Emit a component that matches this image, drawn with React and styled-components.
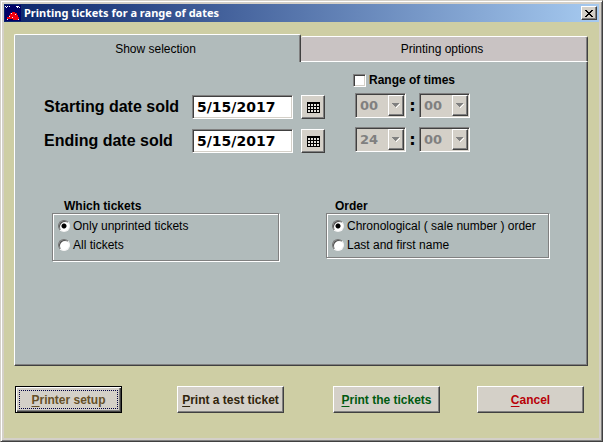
import React, { useState } from "react";
import styled, { createGlobalStyle, css } from "styled-components";

const face = "#d4d0c8";
const pane = "#b1bbbb";
const olive = "#cecea4";

const Global = createGlobalStyle`
  * { box-sizing: border-box; }
  body {
    margin: 0;
    background: ${face};
    font: 12px/14px "Liberation Sans", Arial, sans-serif;
    color: #000;
  }
  button, input, select { font: inherit; color: inherit; margin: 0; }
`;

const raised = css`
  border: 1px solid;
  border-color: #fff #404040 #404040 #fff;
  box-shadow: inset -1px -1px #808080;
`;

const sunken = css`
  border: 1px solid;
  border-color: #808080 #fff #fff #808080;
  box-shadow: inset 1px 1px #404040, inset -1px -1px ${face};
`;

const Window = styled.main`
  display: flex;
  flex-direction: column;
  min-height: 100vh;
  padding: 3px;
  background: ${face};
  border: 1px solid;
  border-color: ${face} #404040 #404040 ${face};
  box-shadow: inset 1px 1px #fff, inset -1px -1px #808080;
`;

const TitleBar = styled.header`
  display: flex;
  align-items: center;
  gap: 3px;
  height: 18px;
  padding: 0 2px 0 1px;
  background: linear-gradient(90deg, #0a246a, #a6caf0);
`;

const Title = styled.h1`
  flex: 1;
  margin: 0;
  color: #fff;
  font: bold 11px/16px "Noto Sans", Tahoma, sans-serif;
`;

const CloseButton = styled.button`
  display: grid;
  place-items: center;
  width: 16px;
  height: 14px;
  padding: 0;
  background: ${face};
  ${raised}
`;

const Body = styled.div`
  flex: 1;
  display: flex;
  flex-direction: column;
  gap: 20px;
  padding: 12px 11px 25px 10px;
  background: ${olive};
`;

const Tabbed = styled.section`
  flex: 1;
  display: flex;
  flex-direction: column;
`;

const TabList = styled.div`
  display: grid;
  grid-template-columns: 1fr 1fr;
  align-items: end;
  height: 28px;
`;

const Tab = styled.button`
  height: ${(p) => (p.$active ? 28 : 26)}px;
  padding: 0 4px 0 0;
  border: 0 solid;
  border-color: #fff #404040 #fff #fff;
  border-width: ${(p) => (p.$active ? "1px 1px 0 1px" : "1px 1px 1px 0")};
  border-radius: 2px 2px 0 0;
  box-shadow: inset -1px 0 #808080;
  background: ${(p) => (p.$active ? pane : "#c9c3c3")};
  font-size: 12px;
`;

const Panel = styled.div`
  flex: 1;
  padding: 11px 36px 20px 29px;
  background: ${pane};
  border: 1px solid;
  border-color: ${pane} #404040 #404040 #fff;
  border-top: 0;
  box-shadow: inset -1px -1px #808080;
`;

const Selection = styled.div`
  display: grid;
  grid-template-columns: 309px auto;
  justify-content: start;
`;

const Dates = styled.div`
  display: grid;
  align-content: start;
  gap: 10px;
  padding-top: 22px;
`;

const DateRow = styled.div`
  display: grid;
  grid-template-columns: 140px 101px 24px;
  column-gap: 8px;
  align-items: center;
  height: 24px;
`;

const DateLabel = styled.label`
  font-size: 16px;
  line-height: 20px;
  font-weight: bold;
  white-space: nowrap;
`;

const DateInput = styled.input`
  width: 101px;
  height: 24px;
  padding: 0 4px;
  background: #fff;
  font: bold 14px/18px "DejaVu Sans", Verdana, sans-serif;
  ${sunken}
`;

const CalendarButton = styled.button`
  display: grid;
  place-items: center;
  width: 24px;
  height: 24px;
  padding: 0;
  background: ${face};
  ${raised}
`;

const Times = styled.div`
  display: flex;
  flex-direction: column;
`;

const CheckLabel = styled.label`
  display: flex;
  align-items: center;
  gap: 3px;
  height: 14px;
  margin-bottom: 6px;
  font-weight: bold;
`;

const Check = styled.input`
  appearance: none;
  width: 13px;
  height: 13px;
  background: #fff;
  ${sunken}
  &:checked { background: #fff linear-gradient(#000, #000) center / 5px 5px no-repeat; }
`;

const TimeRow = styled.div`
  display: flex;
  align-items: center;
  height: 25px;
  margin: 0 0 9px 2px;
`;

const Colon = styled.span`
  width: 13px;
  text-align: center;
  font: bold 16px/20px "DejaVu Sans", Verdana, sans-serif;
`;

const Combo = styled.span`
  position: relative;
  width: 51px;
  height: 25px;
`;

const ComboSelect = styled.select`
  appearance: none;
  width: 100%;
  height: 100%;
  padding: 0 0 0 4px;
  border-radius: 0;
  background: ${face};
  font: bold 13px/18px "DejaVu Sans", Verdana, sans-serif;
  ${sunken}
  &:disabled { color: #808080; opacity: 1; }
`;

const ComboArrow = styled.span`
  position: absolute;
  top: 2px;
  right: 2px;
  bottom: 2px;
  display: grid;
  place-items: center;
  width: 16px;
  background: ${face};
  pointer-events: none;
  ${raised}
`;

const Groups = styled.div`
  display: flex;
  align-items: start;
  gap: 47px;
  margin: 39px 0 0 8px;
`;

const Group = styled.div`
  flex: 0 1 ${(p) => p.$width}px;
`;

const GroupTitle = styled.div`
  padding-left: ${(p) => p.$indent}px;
  line-height: 13px;
  font-weight: bold;
`;

const Choices = styled.div`
  display: grid;
  gap: 5px;
  padding: ${(p) => (p.$roomy ? "5px 5px 8px" : "5px")};
  border: 1px solid #808080;
  box-shadow: inset 1px 1px #fff, 1px 1px #fff;
`;

const Choice = styled.label`
  display: flex;
  align-items: center;
  gap: 3px;
  line-height: 14px;
  white-space: nowrap;
`;

const Radio = styled.input`
  appearance: none;
  width: 12px;
  height: 12px;
  border: 1px solid;
  border-color: #707070 #f4f4f4 #f4f4f4 #707070;
  border-radius: 50%;
  background: #fff;
  box-shadow: inset 1px 1px #505050;
  &:checked { background: radial-gradient(circle, #000 2px, #fff 3px); }
`;

const Actions = styled.footer`
  display: grid;
  grid-template-columns: 162fr 156fr 144fr 107px;
  padding: 0 4px 0 1px;
`;

const ActionButton = styled.button`
  width: 107px;
  height: 27px;
  padding: 0;
  background: ${face};
  color: ${(p) => p.$color};
  font-weight: bold;
  white-space: nowrap;
  ${raised}
  ${(p) =>
    p.$focused &&
    css`
      border-color: #000;
      box-shadow: inset 1px 1px #fff, inset -1px -1px #404040, inset -2px -2px #808080;
      outline: 1px dotted #000040;
      outline-offset: -5px;
    `}
`;

const Key = styled.span`
  text-decoration: underline;
  text-underline-offset: 2px;
`;

function AppIcon() {
  return (
    <svg width="16" height="16" viewBox="0 0 16 16" shapeRendering="crispEdges" aria-hidden="true">
      <path fill="#000066" d="M0 0h16v16H0z" />
      <path fill="#fff" d="M0 1h1v1H0zM2 1h1v1H2zM1 2h1v1H1zM4 1h1v1H4zM11 1h3v1h-3zM12 2h1v1h-1zM14 2h1v1h-1z" />
      <path fill="#f00010" d="M7 7h3v1h2v2h1v2h1v3H8v-1H2v-2h2v-2h1V8h2z" />
      <path fill="#fff" d="M6 8h1v1H6zM10 9h1v1h-1zM4 11h1v1H4zM7 12h1v1H7zM2 14h1v1H2zM13 14h1v1h-1z" />
    </svg>
  );
}

function CalendarIcon() {
  return (
    <svg width="13" height="11" viewBox="0 0 13 11" shapeRendering="crispEdges" aria-hidden="true">
      <path d="M0 0h13v11H0z" />
      <path
        fill="#e4e2dc"
        d="M1 2h2v2H1zM4 2h2v2H4zM7 2h2v2H7zM10 2h2v2h-2zM1 5h2v2H1zM4 5h2v2H4zM7 5h2v2H7zM10 5h2v2h-2zM1 8h2v2H1zM4 8h2v2H4zM7 8h2v2H7zM10 8h2v2h-2z"
      />
    </svg>
  );
}

function CloseIcon() {
  return (
    <svg width="8" height="7" viewBox="0 0 8 7" shapeRendering="crispEdges" aria-hidden="true">
      <path d="M0 0h2v1h1v1h2V1h1V0h2v1H7v1H6v1H5v1h1v1h1v1h1v1H6V6H5V5H3v1H2v1H0V6h1V5h1V4h1V3H2V2H1V1H0z" />
    </svg>
  );
}

function TimeSelect({ label, value, disabled }) {
  return (
    <Combo>
      <ComboSelect aria-label={label} defaultValue={value} disabled={disabled}>
        <option>{value}</option>
      </ComboSelect>
      <ComboArrow>
        <svg width="8" height="5" viewBox="0 0 8 5" shapeRendering="crispEdges" aria-hidden="true">
          <path fill="#fff" d="M7 1h1v1H7v1H6v1H5v1H4V4h1V3h1V2h1z" />
          <path fill="#808080" d="M0 0h7v1H6v1H5v1H4v1H3V3H2V2H1V1H0z" />
        </svg>
      </ComboArrow>
    </Combo>
  );
}

function DateField({ id, label }) {
  return (
    <DateRow>
      <DateLabel htmlFor={id}>{label}</DateLabel>
      <DateInput id={id} defaultValue="5/15/2017" />
      <CalendarButton type="button" aria-label={`Choose ${label.toLowerCase()}`}>
        <CalendarIcon />
      </CalendarButton>
    </DateRow>
  );
}

function RadioGroup({ name, title, options, width, indent, roomy }) {
  return (
    <Group role="radiogroup" aria-labelledby={name} $width={width}>
      <GroupTitle id={name} $indent={indent}>{title}</GroupTitle>
      <Choices $roomy={roomy}>
        {options.map((text, i) => (
          <Choice key={text}>
            <Radio type="radio" name={name} defaultChecked={i === 0} />
            {text}
          </Choice>
        ))}
      </Choices>
    </Group>
  );
}

const actions = [
  { key: "P", rest: "rinter setup", color: "#665028", focused: true },
  { key: "P", rest: "rint a test ticket", color: "#30240c" },
  { key: "P", rest: "rint the tickets", color: "#005a10" },
  { key: "C", rest: "ancel", color: "#b80008" },
];

export default function App() {
  const [useTimes, setUseTimes] = useState(false);
  return (
    <>
      <Global />
      <Window>
        <TitleBar>
          <AppIcon />
          <Title>Printing tickets for a range of dates</Title>
          <CloseButton type="button" aria-label="Close">
            <CloseIcon />
          </CloseButton>
        </TitleBar>
        <Body>
          <Tabbed>
            <TabList role="tablist">
              <Tab type="button" role="tab" aria-selected="true" $active>Show selection</Tab>
              <Tab type="button" role="tab" aria-selected="false">Printing options</Tab>
            </TabList>
            <Panel role="tabpanel">
              <Selection>
                <Dates>
                  <DateField id="start" label="Starting date sold" />
                  <DateField id="end" label="Ending date sold" />
                </Dates>
                <Times>
                  <CheckLabel>
                    <Check type="checkbox" checked={useTimes} onChange={(e) => setUseTimes(e.target.checked)} />
                    Range of times
                  </CheckLabel>
                  <TimeRow>
                    <TimeSelect label="Start hour" value="00" disabled={!useTimes} />
                    <Colon>:</Colon>
                    <TimeSelect label="Start minute" value="00" disabled={!useTimes} />
                  </TimeRow>
                  <TimeRow>
                    <TimeSelect label="End hour" value="24" disabled={!useTimes} />
                    <Colon>:</Colon>
                    <TimeSelect label="End minute" value="00" disabled={!useTimes} />
                  </TimeRow>
                </Times>
              </Selection>
              <Groups>
                <RadioGroup
                  name="which"
                  title="Which tickets"
                  options={["Only unprinted tickets", "All tickets"]}
                  width={227}
                  indent={12}
                  roomy
                />
                <RadioGroup
                  name="order"
                  title="Order"
                  options={["Chronological ( sale number ) order", "Last and first name"]}
                  width={223}
                  indent={9}
                />
              </Groups>
            </Panel>
          </Tabbed>
          <Actions>
            {actions.map((a) => (
              <ActionButton key={a.rest} type="button" $color={a.color} $focused={a.focused}>
                <Key>{a.key}</Key>
                {a.rest}
              </ActionButton>
            ))}
          </Actions>
        </Body>
      </Window>
    </>
  );
}
